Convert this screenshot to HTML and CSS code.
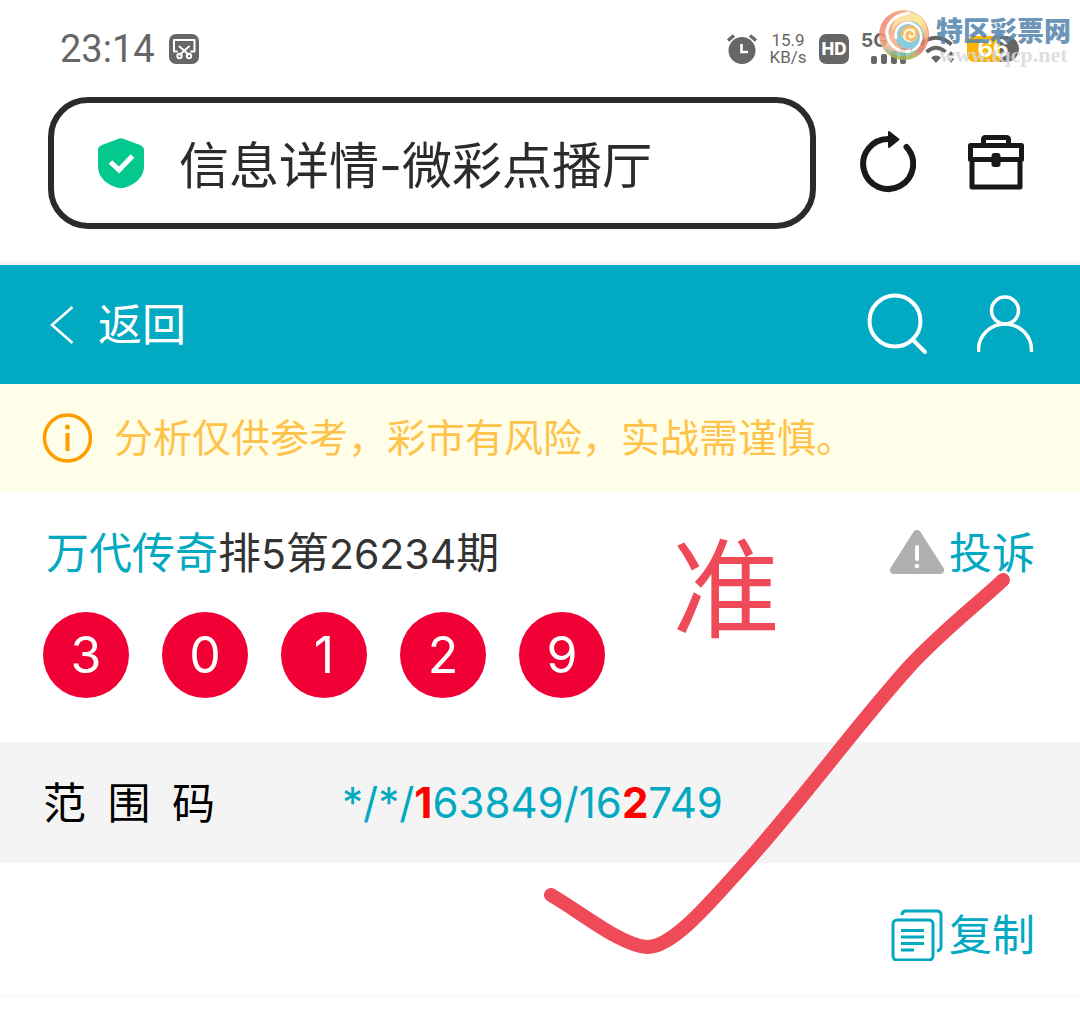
FILE: index.html
```html
<!DOCTYPE html>
<html lang="zh-CN">
<head>
<meta charset="utf-8">
<meta name="viewport" content="width=device-width, initial-scale=1">
<title>信息详情-微彩点播厅</title>
<link rel="stylesheet" href="styles.css">
</head>
<body>
<header class="status">
  <div class="status-left">
    <time class="clock">23:14</time>
    <svg width="30" height="30" viewBox="0 0 30 30" aria-hidden="true">
      <rect width="30" height="30" rx="7" fill="#666"/>
      <g fill="none" stroke="#fff" stroke-width="2" stroke-linecap="round" stroke-linejoin="round">
        <path d="M8 17.500H5V6H25.500V17.500H22M10.500 12.500L19.500 20.500M20 12.500L11 20.500"/>
        <circle cx="10.500" cy="22" r="2.200"/><circle cx="20" cy="22" r="2.200"/>
      </g>
    </svg>
  </div>
  <div class="status-right">
    <svg width="30" height="30" viewBox="0 0 30 30" aria-hidden="true">
      <circle cx="15" cy="16.500" r="13.500" fill="#666"/>
      <path d="M1 6.500L7 1.500M29 6.500L23 1.500" stroke="#666" stroke-width="3.200"/>
      <path d="M14.500 10V18H21" fill="none" stroke="#fff" stroke-width="2.600"/>
    </svg>
    <div class="speed"><span>15.9</span><span>KB/s</span></div>
    <span class="hd">HD</span>
    <div class="cell">
      <span class="net">5G</span>
      <svg class="bars" width="36" height="16" viewBox="0 0 36 16" aria-hidden="true">
        <g fill="#666"><rect y="8" width="6" height="8" rx="2"/><rect x="10" y="6" width="6" height="10" rx="2"/><rect x="20" y="3" width="6" height="13" rx="2"/><rect x="29" y="0" width="6" height="16" rx="2"/></g>
      </svg>
    </div>
    <svg class="wifi" width="36" height="30" viewBox="0 0 36 30" aria-hidden="true">
      <g fill="none" stroke="#666" stroke-width="4"><path d="M1.500 10.500Q17 -3 32.500 10.500M7.500 18Q17 9.500 26.500 18"/></g>
      <path d="M17 29L12 23.500Q17 19.500 22 23.500Z" fill="#666"/>
      <path d="M32 17L35.500 21.500H28.500ZM32 29L35.500 24.500H28.500Z" fill="#666"/>
    </svg>
    <div class="battery"><span>66</span></div>
  </div>
  <div class="watermark">
    <svg width="52" height="52" viewBox="0 0 52 52" aria-hidden="true">
      <defs>
        <linearGradient id="base" x1="0" y1="0" x2="1" y2=".6"><stop offset="0" stop-color="#e86a55"/><stop offset=".45" stop-color="#f7b68c"/><stop offset="1" stop-color="#e27464"/></linearGradient>
        <linearGradient id="gold" x1="0" y1="0" x2="1" y2="1"><stop offset="0" stop-color="#fbd9a0"/><stop offset=".5" stop-color="#fde68a"/><stop offset="1" stop-color="#ee9068"/></linearGradient>
      </defs>
      <circle cx="25" cy="26" r="25" fill="url(#base)"/>
      <path d="M14 15C20 2 38 0 45 12C51 22 50 32 46 38C47 24 42 13 31 12C23 11 17 15 13 22Z" fill="url(#gold)"/>
      <path d="M4 38C14 46 28 50 42 43C37 49 31 51 26 51C15 51 8 45 4 38Z" fill="#a9b54f"/>
      <path d="M5 36C15 48 36 46 42 31C41 42 31 49 20 47C12 45 7 41 5 36Z" fill="#7fcab4"/>
      <path d="M30 4C13 6 5 18 9 29C12 39 22 44 31 42" fill="none" stroke="#fff" stroke-width="3" stroke-linecap="round"/>
      <circle cx="30" cy="26" r="14" fill="#74c5da"/>
      <path d="M17 29C15 17 27 10 36 16C45 22 44 36 34 41" fill="none" stroke="#fff" stroke-width="2.500" stroke-linecap="round"/>
      <circle cx="31" cy="25" r="8" fill="#fff3c4"/>
      <path d="M23 26C23 16 36 15 38 23C39 31 30 33 28 28C27 24 31 22 33 25" fill="none" stroke="#f4ae55" stroke-width="3" stroke-linecap="round"/>
    </svg>
    <div class="mark-text"><strong>特区彩票网</strong><span>www.tqcp.net</span></div>
  </div>
</header>

<div class="browser">
  <label class="address">
    <svg width="48" height="52" viewBox="0 0 48 52" aria-hidden="true">
      <path d="M21 2Q24 .500 27 2L43 8Q47 9.500 47 13V29C47 42 36 48 28 50.500Q24 51.500 20 50.500C12 48 1 42 1 29V13Q1 9.500 5 8Z" fill="#03c98f"/>
      <path d="M13.500 25L22 33L35.500 19" fill="none" stroke="#fff" stroke-width="5"/>
    </svg>
    <input class="address-input" type="text" value="信息详情-微彩点播厅" aria-label="地址栏">
  </label>
  <button class="icon-btn" type="button" aria-label="刷新">
    <svg width="56" height="64" viewBox="0 0 56 64">
      <path d="M28 10A25 25 0 1 0 46.500 18" fill="none" stroke="#191919" stroke-width="6" stroke-linecap="round"/>
      <path d="M29 3L38.500 10.500L29 18Z" fill="#191919" stroke="#191919" stroke-width="2" stroke-linejoin="round"/>
    </svg>
  </button>
  <button class="icon-btn" type="button" aria-label="工具箱">
    <svg width="58" height="58" viewBox="0 0 58 58">
      <g fill="none" stroke="#191919" stroke-width="5" stroke-linejoin="round"><path d="M4.500 13.500H55.500V27.500H4.500ZM6 27V55H54V27M17.500 13V7.500Q17.500 5.500 19.500 5.500H40Q42.500 5.500 42.500 7.500V13"/></g>
      <rect x="25.500" y="21" width="9" height="14" rx="3" fill="#191919"/>
    </svg>
  </button>
</div>

<nav class="topbar">
  <a class="back" href="#">
    <svg width="24" height="40" viewBox="0 0 24 40" aria-hidden="true"><path d="M22.500 2L2 20L22.500 38" fill="none" stroke="#fff" stroke-width="2.600"/></svg>
    返回
  </a>
  <button class="icon-btn" type="button" aria-label="搜索">
    <svg width="62" height="64" viewBox="0 0 62 64"><g fill="none" stroke="#fff" stroke-width="4" stroke-linecap="round"><circle cx="28" cy="28" r="25.500"/><path d="M46 47L58 59"/></g></svg>
  </button>
  <button class="icon-btn" type="button" aria-label="我的">
    <svg width="58" height="60" viewBox="0 0 58 60"><g fill="none" stroke="#fff" stroke-width="3.500"><circle cx="28" cy="15.500" r="13.500"/><path d="M1.500 57V55A26.500 26 0 0 1 54.500 55V57"/></g></svg>
  </button>
</nav>

<p class="notice">
  <svg width="50" height="50" viewBox="0 0 50 50" aria-hidden="true"><circle cx="25.500" cy="25" r="23" fill="none" stroke="#ff9c00" stroke-width="3.500"/><circle cx="25.500" cy="14" r="2.500" fill="#ff9c00"/><path d="M25.500 20V38" stroke="#ff9c00" stroke-width="4"/></svg>
  <span>分析仅供参考，彩市有风险，实战需谨慎。</span>
</p>

<main class="content">
  <section class="result">
    <div class="result-head">
      <h1 class="issue"><a href="#">万代传奇</a>排<span class="num">5</span>第<span class="num">26234</span>期</h1>
      <a class="action" href="#">
        <svg width="56" height="46" viewBox="0 0 56 46" aria-hidden="true"><path d="M28 4L51 40H5Z" fill="#b0b0b0" stroke="#b0b0b0" stroke-width="8" stroke-linejoin="round"/><path d="M28 17V29" stroke="#fff" stroke-width="4" stroke-linecap="round"/><circle cx="28" cy="36" r="2.300" fill="#fff"/></svg>
        投诉
      </a>
    </div>
    <ol class="balls"><li>3</li><li>0</li><li>1</li><li>2</li><li>9</li></ol>
  </section>
  <dl class="code">
    <dt>范&ensp;围&ensp;码</dt>
    <dd>*/*/<b>1</b>63849/16<b>2</b>749</dd>
  </dl>
  <div class="copy-row">
    <button class="action" type="button">
      <svg width="56" height="52" viewBox="0 0 56 52" aria-hidden="true"><g fill="none" stroke="#02a9c1" stroke-width="3"><rect x="4" y="11" width="40" height="40" rx="4"/><path d="M13 6Q13 2 17 2H48Q52 2 52 6V38Q52 41 48 42"/></g><path d="M12 21.500H35M12 28H35M12 34.500H35M12 41H25" stroke="#02a9c1" stroke-width="3"/></svg>
      复制
    </button>
  </div>
  <div class="annotation">
    <span class="verdict">准</span>
    <svg class="tick" width="480" height="400" viewBox="0 0 480 400" aria-hidden="true"><path d="M12 323C43 341 83 374 108 375C134 376 174 327 205 293C265 226 316 155 369 96C402 60 434 36 464 8" fill="none" stroke="#ee4a58" stroke-width="14" stroke-linecap="round" stroke-linejoin="round"/></svg>
  </div>
</main>
</body>
</html>
```
FILE: styles.css
```css
* { box-sizing: border-box; }

body {
  margin: 0;
  background: #fff;
  color: #333;
  font-family: Inter, "Noto Sans CJK SC", sans-serif;
  font-size: 43px;
  line-height: 60px;
}

svg { display: block; flex: none; }
a { color: #02a9c1; text-decoration: none; }
button { padding: 0; border: 0; background: none; font: inherit; cursor: pointer; }

/* phone status bar */
.status {
  position: relative;
  display: flex;
  justify-content: space-between;
  align-items: center;
  height: 97px;
  padding: 0 61px 0 60px;
  color: #666;
}
.status-left { display: flex; align-items: center; gap: 14px; }
.clock { font-family: Roboto, sans-serif; font-size: 38px; }
.status-right { display: flex; align-items: center; gap: 12px; }
.speed {
  display: flex;
  flex-direction: column;
  width: 38px;
  font-size: 17px;
  line-height: 17px;
  text-align: center;
}
.speed span { font-family: Roboto, sans-serif; }
.hd {
  width: 30px;
  height: 30px;
  border-radius: 7px;
  background: #666;
  color: #fff;
  font-size: 17px;
  font-weight: 800;
  line-height: 30px;
  text-align: center;
}
.cell { display: flex; flex-direction: column; width: 46px; height: 30px; }
.net { font-size: 19px; font-weight: 700; line-height: 14px; }
.bars { align-self: flex-end; }
.battery {
  width: 52px;
  height: 26px;
  border-radius: 8px 14px 14px 8px;
  background: linear-gradient(90deg, #fdb400 33px, #666 33px);
  color: #fff;
  font-size: 24px;
  font-weight: 700;
  line-height: 26px;
  text-align: center;
}
.watermark {
  position: absolute;
  top: 9px;
  right: 9px;
  display: flex;
  gap: 5px;
  opacity: .85;
  white-space: nowrap;
}
.mark-text { display: flex; flex-direction: column; padding-top: 9px; }
.mark-text strong { color: #5383ac; font-size: 27px; font-weight: 900; line-height: 28px; }
.mark-text span {
  color: #d6d9dd;
  font-family: "Liberation Serif", serif;
  font-size: 22px;
  font-weight: 700;
  line-height: 18px;
  text-align: center;
}

/* browser address bar */
.browser {
  display: flex;
  align-items: center;
  gap: 50px;
  padding: 0 56px 32px 48px;
  border-bottom: 4px solid #f5f5f5;
}
.browser .icon-btn { padding-bottom: 4px; }
.address {
  display: flex;
  flex: 1;
  align-items: center;
  gap: 34px;
  min-width: 0;
  height: 132px;
  padding: 0 43px;
  border: 6px solid #2b2b2b;
  border-radius: 40px;
}
.address-input {
  flex: 1;
  min-width: 0;
  padding: 6px 0 0;
  border: 0;
  outline: 0;
  background: none;
  color: #2b2b2b;
  font: inherit;
  font-size: 50px;
}
.address + .icon-btn { margin-left: -6px; }

/* site header */
.topbar {
  display: flex;
  align-items: center;
  gap: 48px;
  height: 119px;
  padding: 0 45px 0 50px;
  background: #02a9c3;
}
.back {
  display: flex;
  align-items: center;
  gap: 24px;
  margin-right: auto;
  color: #fff;
  font-size: 44px;
}

.notice {
  display: flex;
  align-items: center;
  gap: 22px;
  min-height: 107px;
  margin: 0;
  padding: 0 42px;
  background: #fffee9;
  color: #ffc24b;
  font-size: 39px;
}

.content { position: relative; }
.result { padding: 32px 45px 44px 43px; }
.result-head { display: flex; justify-content: space-between; align-items: center; }
.issue { margin: 0; padding-left: 3px; font-size: 43px; font-weight: 400; }
.num { font-size: 41px; line-height: 1; }
.action { display: flex; align-items: center; gap: 4px; color: #02a9c1; }
.balls { display: flex; gap: 33px; margin: 29px 0 0; padding: 0; list-style: none; }
.balls li {
  width: 86px;
  height: 86px;
  border-radius: 50%;
  background: #f00035;
  color: #fff;
  font-size: 50px;
  line-height: 86px;
  text-align: center;
}

.code {
  display: flex;
  align-items: center;
  min-height: 121px;
  margin: 0;
  padding: 0 43px;
  background: #f4f4f4;
}
.code dt { width: 299px; color: #000; }
.code dd { margin: 0; color: #02a9c1; font-size: 42px; }
.code b { color: #f00; }

.copy-row {
  display: flex;
  justify-content: flex-end;
  padding: 42px 45px 29px;
  border-bottom: 3px solid #fafafa;
}

/* hand-drawn marks over the result */
.annotation { position: absolute; top: 0; right: 0; pointer-events: none; }
.verdict {
  position: absolute;
  top: 39px;
  right: 300px;
  color: #ee4a58;
  font-size: 108px;
  line-height: 120px;
}
.tick { position: absolute; top: 81px; right: 61px; }
```
